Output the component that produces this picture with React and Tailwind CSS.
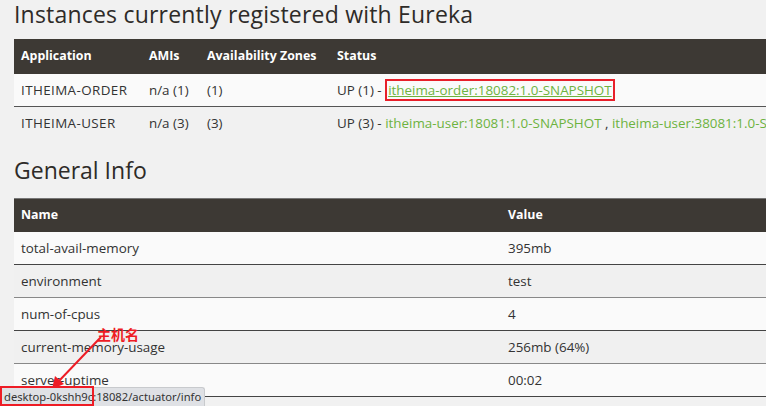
import React from 'react';

const FONT = { fontFamily: '"Open Sans", "DejaVu Sans", sans-serif' };

const apps = [
  { name: 'ITHEIMA-ORDER', amis: 'n/a (1)', zones: '(1)', status: 'UP (1) - ', links: ['itheima-order:18082:1.0-SNAPSHOT'], boxed: true },
  { name: 'ITHEIMA-USER', amis: 'n/a (3)', zones: '(3)', status: 'UP (3) - ', links: ['itheima-user:18081:1.0-SNAPSHOT', 'itheima-user:38081:1.0-SNAPSHOT'] },
];

const info = [
  ['total-avail-memory', '395mb'],
  ['environment', 'test'],
  ['num-of-cpus', '4'],
  ['current-memory-usage', '256mb (64%)'],
  ['server-uptime', '00:02'],
];

const App = () => {
  return (
    <div className="relative w-[766px] h-[406px] overflow-hidden bg-[#f1f1f1] text-[#333]" style={FONT}>
      <div className="pl-[14px]">
        {/* Instances */}
        <h1 className="text-[23px] leading-[28px] tracking-[0.2px] text-[#2e2b28] h-[39px] whitespace-nowrap">
          Instances currently registered with Eureka
        </h1>
        <div className="w-[1000px] text-[13.4px]">
          <div className="flex h-[35px] items-center bg-[#3d3934] text-white font-bold text-[12.4px]">
            <div className="w-[135px] pl-[7px]">Application</div>
            <div className="w-[58px]">AMIs</div>
            <div className="w-[130px]">Availability Zones</div>
            <div className="flex-1">Status</div>
          </div>
          {apps.map((app, i) => (
            <div
              key={app.name}
              className={`flex h-[33px] items-center whitespace-nowrap ${i === 0 ? 'bg-[#fafafa] border-b border-[#555]' : 'bg-[#f1f1f1]'}`}
            >
              <div className="w-[135px] pl-[7px] tracking-[0.4px]">{app.name}</div>
              <div className="w-[58px]">{app.amis}</div>
              <div className="w-[130px]">{app.zones}</div>
              <div className="flex-1 flex items-center">
                <span className="whitespace-pre">{app.status}</span>
                {app.boxed ? (
                  <span className="border-2 border-[#e8202a] px-[1px] h-[22px] flex items-center">
                    <span className="text-[#6db33f] underline">{app.links[0]}</span>
                  </span>
                ) : (
                  <span className="text-[#6db33f]">
                    {app.links[0]}
                    <span className="text-[#333]"> , </span>
                    {app.links[1]}
                  </span>
                )}
              </div>
            </div>
          ))}
        </div>

        {/* General Info */}
        <h2 className="text-[23px] leading-[28px] text-[#2e2b28] pt-[16px] h-[58px]">General Info</h2>
        <div className="w-[1000px] text-[13.4px]">
          <div className="flex h-[34px] items-center bg-[#3d3934] text-white font-bold text-[12.4px] border-t border-[#777]">
            <div className="w-[494px] pl-[7px]">Name</div>
            <div className="flex-1">Value</div>
          </div>
          {info.map(([k, v], i) => (
            <div
              key={k}
              className={`flex h-[33px] items-center border-b ${i % 2 === 0 ? 'bg-[#fafafa] border-[#444]' : 'bg-[#f0f0f0] border-[#888]'}`}
            >
              <div className="w-[494px] pl-[7px]">{k}</div>
              <div className="flex-1">{v}</div>
            </div>
          ))}
        </div>
      </div>

      {/* annotation */}
      <div
        className="absolute left-[97px] top-[324px] text-[14px] font-bold text-[#ee1c25]"
        style={{ fontFamily: '"Noto Sans CJK SC", sans-serif' }}
      >
        主机名
      </div>
      <svg className="absolute left-0 top-0" width="766" height="406">
        <line x1="101" y1="337" x2="58" y2="382" stroke="#ee1c25" strokeWidth="2" />
        <polygon points="52,389 55,376 64,384" fill="#ee1c25" />
      </svg>

      {/* status bar */}
      <div
        className="absolute left-0 bottom-0 h-[19px] w-[205px] bg-[#dfe1e5] border-t border-r border-[#c8cacd] rounded-tr-[3px] flex items-center pl-[4px] text-[11.2px] text-[#333] whitespace-nowrap"
        style={{ fontFamily: '"Noto Sans", sans-serif' }}
      >
        desktop-0kshh9c:18082/actuator/info
      </div>
      <div className="absolute left-0 bottom-0 h-[20px] w-[94px] border-2 border-[#ee1c25]" />
    </div>
  );
};

export default App;
